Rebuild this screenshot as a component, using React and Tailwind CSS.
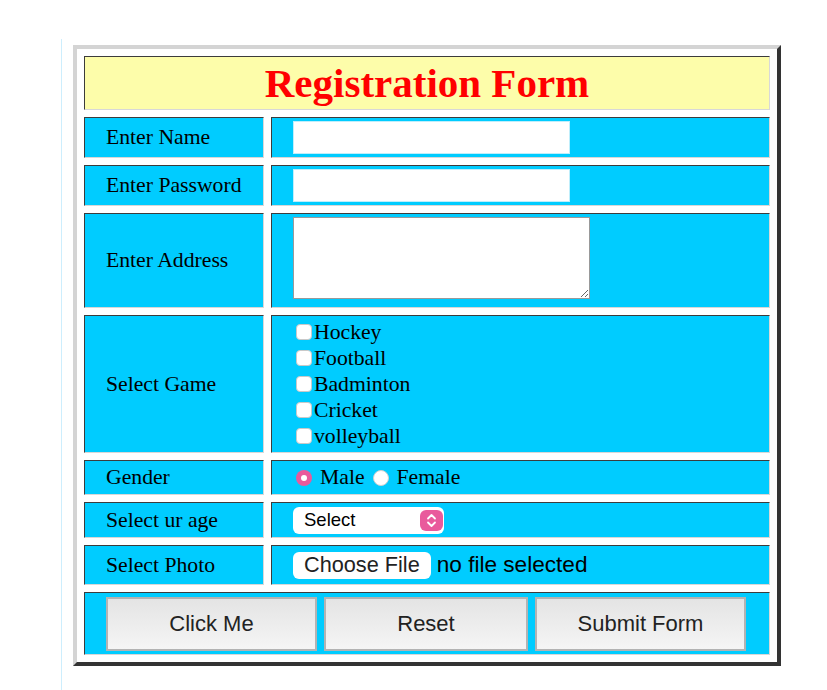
const serif = { fontFamily: '"Liberation Serif", "Times New Roman", serif' };
const sans = { fontFamily: '"Liberation Sans", Arial, sans-serif' };

const cell =
    "bg-[#00ccff] border border-t-[#3c3c3c] border-l-[#3c3c3c] border-r-[#d8d8d8] border-b-[#d8d8d8] flex items-center";

const Label = ({ text, h }) => (
    <div className={`${cell} pl-[21px] text-[21.7px] text-black ${h}`}>{text}</div>
);

const CheckBox = ({ text }) => (
    <div className="flex items-center h-[26px]">
        <span className="w-4 h-4 ml-[3px] mr-[2px] rounded-[4px] bg-white border border-[#c9c9c9]"></span>
        <span>{text}</span>
    </div>
);

const games = ["Hockey", "Football", "Badminton", "Cricket", "volleyball"];

export default function App() {
    return (
        <div className="min-h-[690px] bg-white pt-[39px] pl-[61px]" style={serif}>
            <div className="border-l border-[#cdeefd] h-[651px] pl-[11px] pt-[6px]">
                <div className="w-[708px] bg-white p-[7px] border-4 border-t-[#d4d4d4] border-l-[#d4d4d4] border-r-[#333333] border-b-[#333333]">
                    <div className="grid grid-cols-[180px_499px] gap-[7px]">

                        {/* Header */}
                        <div className="col-span-2 h-[54px] bg-[#fdfdaa] border border-t-[#3c3c3c] border-l-[#3c3c3c] border-r-[#d8d8d8] border-b-[#d8d8d8] flex items-center justify-center">
                            <h1 className="text-[41px] font-bold text-[#ff0000] leading-none">Registration Form</h1>
                        </div>

                        {/* Name */}
                        <Label text="Enter Name" h="h-[41px]" />
                        <div className={`${cell} pl-[21px] h-[41px]`}>
                            <input type="text" className="w-[277px] h-[33px] bg-white border border-[#bfeefb] outline-none" />
                        </div>

                        {/* Password */}
                        <Label text="Enter Password" h="h-[41px]" />
                        <div className={`${cell} pl-[21px] h-[41px]`}>
                            <input type="password" className="w-[277px] h-[33px] bg-white border border-[#bfeefb] outline-none" />
                        </div>

                        {/* Address */}
                        <Label text="Enter Address" h="h-[95px]" />
                        <div className="bg-[#00ccff] border border-t-[#3c3c3c] border-l-[#3c3c3c] border-r-[#d8d8d8] border-b-[#d8d8d8] flex items-start pl-[21px] pt-[3px] h-[95px]">
                            <textarea className="w-[297px] h-[82px] bg-white border border-[#999999] outline-none"></textarea>
                        </div>

                        {/* Games */}
                        <Label text="Select Game" h="h-[138px]" />
                        <div className="bg-[#00ccff] border border-t-[#3c3c3c] border-l-[#3c3c3c] border-r-[#d8d8d8] border-b-[#d8d8d8] flex flex-col justify-center pl-[21px] h-[138px] text-[21.7px]">
                            {games.map((g, i) => <CheckBox key={i} text={g} />)}
                        </div>

                        {/* Gender */}
                        <Label text="Gender" h="h-[35px]" />
                        <div className={`${cell} pl-[21px] h-[35px] text-[21.7px]`}>
                            <span className="w-4 h-4 ml-[3px] mr-[8px] rounded-full bg-[#e95a9c] flex items-center justify-center">
                                <span className="w-[6px] h-[6px] rounded-full bg-white"></span>
                            </span>
                            <span>Male</span>
                            <span className="w-4 h-4 ml-[8px] mr-[8px] rounded-full bg-white border border-[#d0d0d0]"></span>
                            <span>Female</span>
                        </div>

                        {/* Age */}
                        <Label text="Select ur age" h="h-[36px]" />
                        <div className={`${cell} pl-[21px] h-[36px]`}>
                            <div className="w-[151px] h-[27px] bg-white rounded-[6px] flex items-center justify-between pl-[11px] pr-[1px]" style={sans}>
                                <span className="text-[18.5px] text-black">Select</span>
                                <span className="w-[23px] h-[21px] rounded-[6px] bg-[#e95a9c] flex items-center justify-center">
                                    <svg width="11" height="15" viewBox="0 0 11 15" fill="none" stroke="white" strokeWidth="1.8" strokeLinecap="round" strokeLinejoin="round">
                                        <path d="M2 5.5 L5.5 2 L9 5.5" />
                                        <path d="M2 9.5 L5.5 13 L9 9.5" />
                                    </svg>
                                </span>
                            </div>
                        </div>

                        {/* Photo */}
                        <Label text="Select Photo" h="h-[40px]" />
                        <div className={`${cell} pl-[21px] h-[40px]`} style={sans}>
                            <span className="h-[27px] px-[11px] bg-white rounded-[6px] flex items-center text-[21.7px] text-[#222]">Choose File</span>
                            <span className="ml-[6px] text-[22.6px] text-black">no file selected</span>
                        </div>

                        {/* Buttons */}
                        <div className={`col-span-2 ${cell} pl-[21px] gap-[7px] h-[63px]`} style={sans}>
                            <button className="w-[211px] h-[54px] border-2 border-[#b3b3b3] bg-linear-to-b from-[#e4e4e4] to-[#f5f5f5] text-[22px] text-[#222]">Click Me</button>
                            <button className="w-[204px] h-[54px] border-2 border-[#b3b3b3] bg-linear-to-b from-[#e4e4e4] to-[#f5f5f5] text-[22px] text-[#222]">Reset</button>
                            <button className="w-[211px] h-[54px] border-2 border-[#b3b3b3] bg-linear-to-b from-[#e4e4e4] to-[#f5f5f5] text-[22px] text-[#222]">Submit Form</button>
                        </div>
                    </div>
                </div>
            </div>
        </div>
    );
}
